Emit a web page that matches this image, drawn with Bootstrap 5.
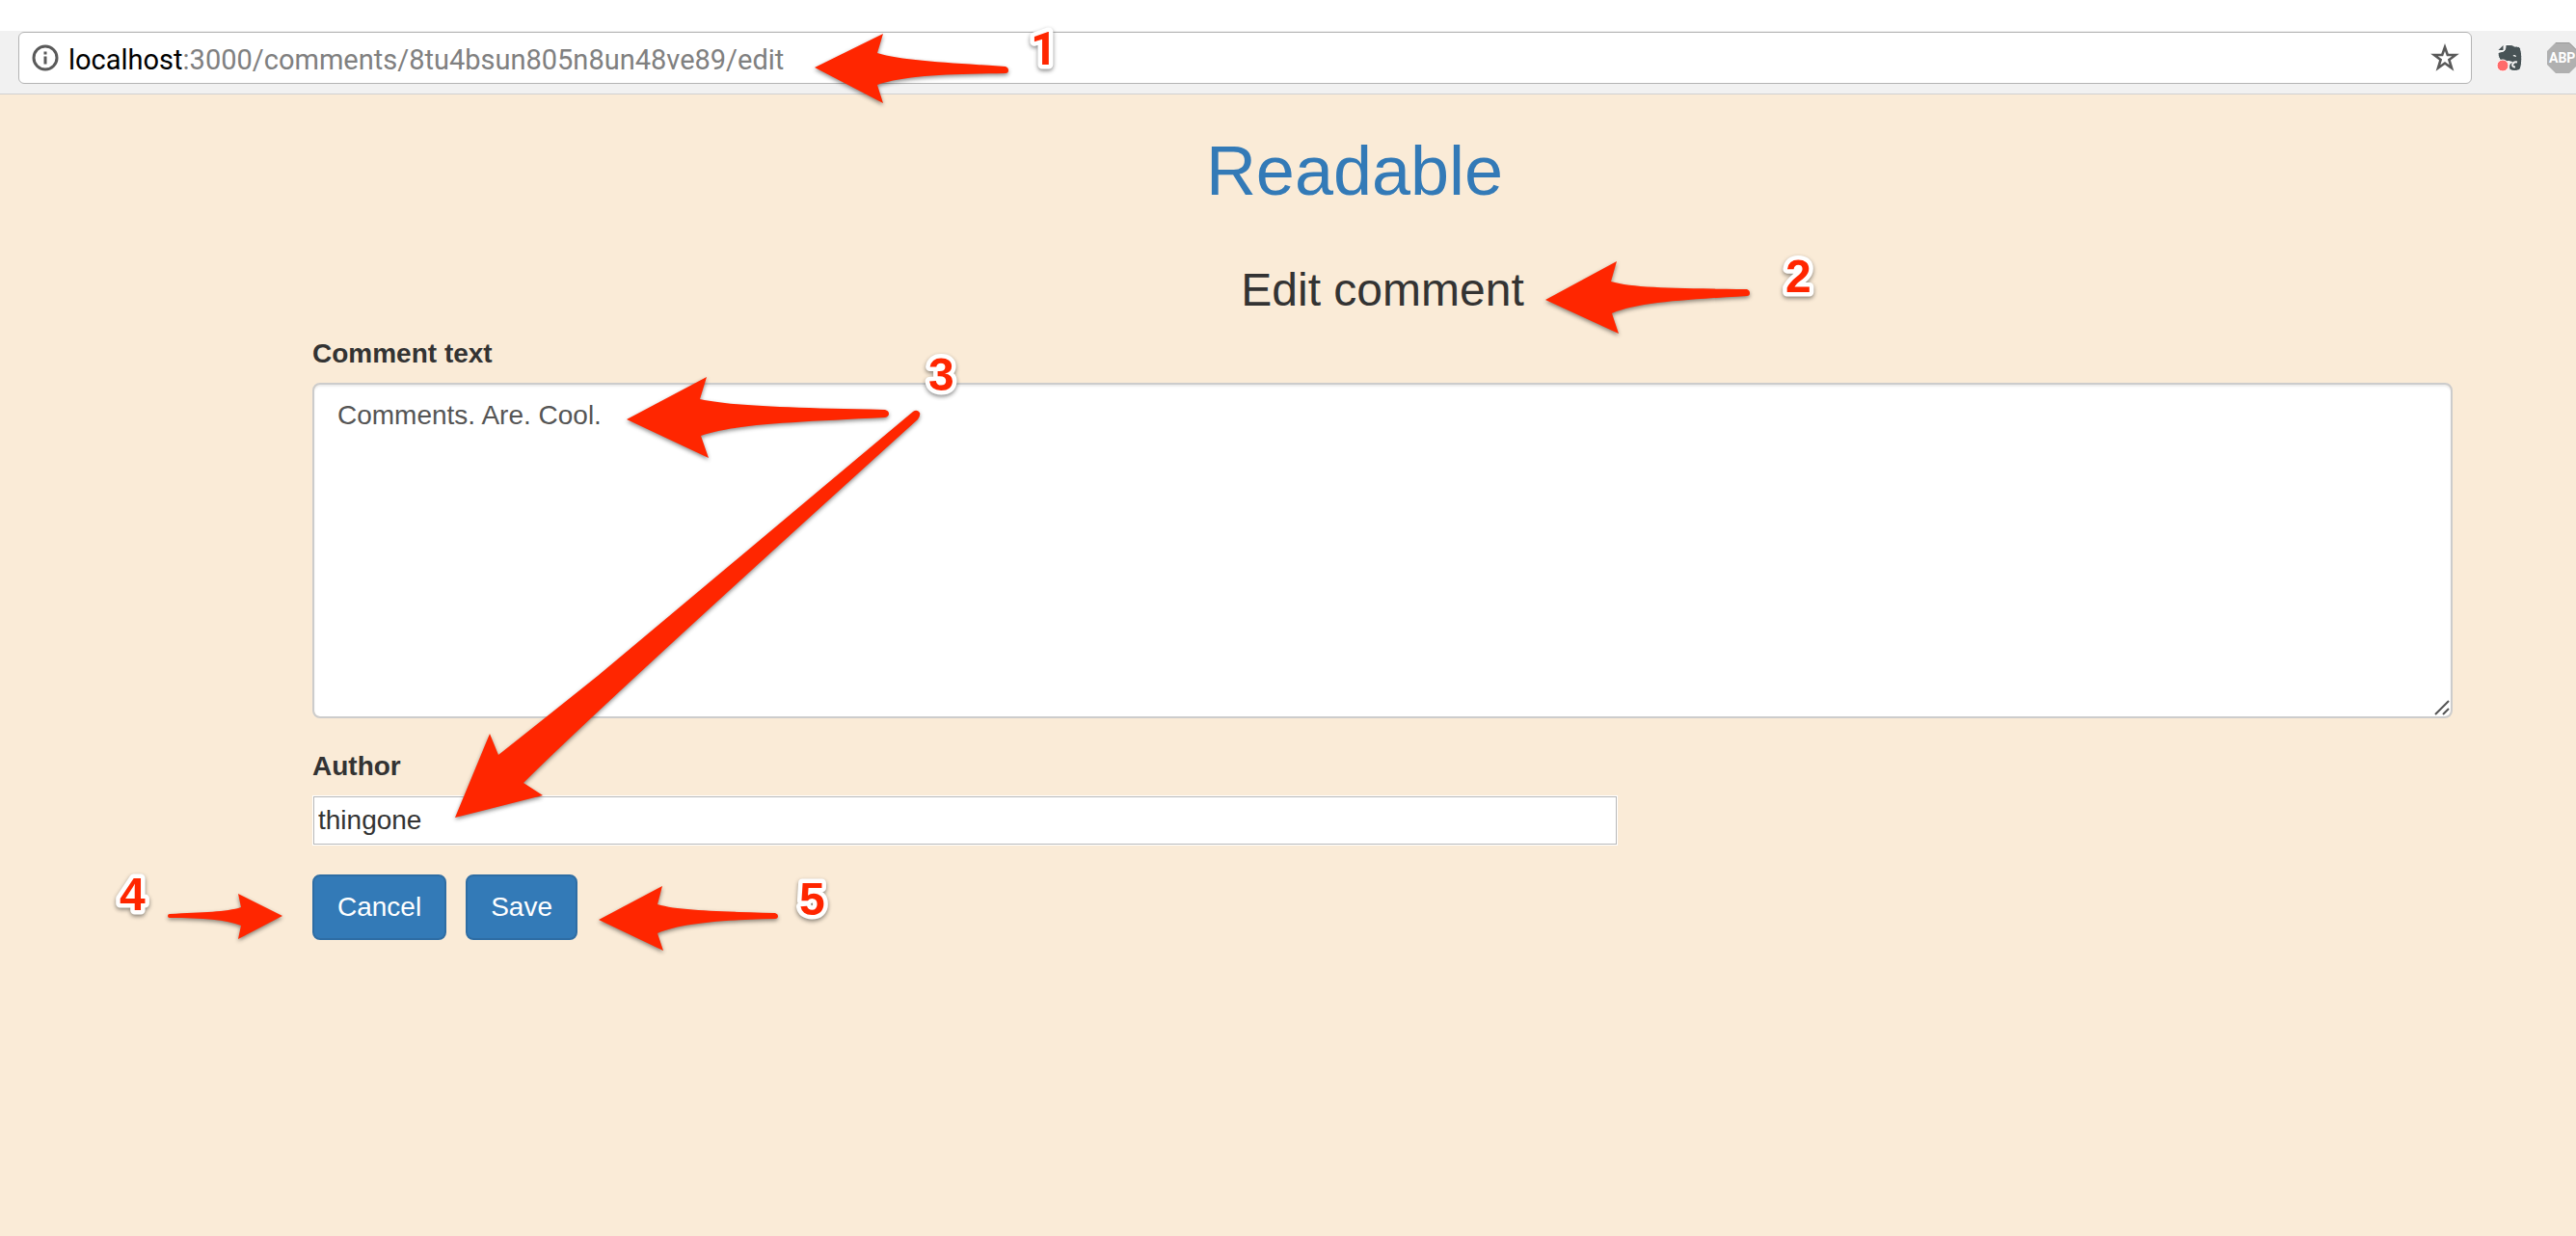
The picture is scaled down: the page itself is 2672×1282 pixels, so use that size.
<!DOCTYPE html>
<html lang="en">
<head>
<meta charset="utf-8">
<meta name="viewport" content="width=device-width, initial-scale=1">
<title>Readable</title>
<link href="https://cdn.jsdelivr.net/npm/bootstrap@5.3.0/dist/css/bootstrap.min.css" rel="stylesheet">
<style>
  body { background: #faebd7; color: #333; font: 28px/40px "Liberation Sans", Arial, sans-serif; }
  .page-shell { min-height: 100vh; }
  .tab-strip { height: 32px; background: #fff; }
  .browser-bar { background: #f1f1f1; border-bottom: 1px solid #d0d0d0; padding: 1px 0 10px 19px; }
  .address-box { height: 54px; background: #fff; border: 1px solid #b4b4b4; border-radius: 6px; padding: 0 12px 0 11px; font-family: Roboto, sans-serif; font-size: 29px; color: #808080; }
  .address-box b { font-weight: 400; color: #000; }
  .extensions { padding-left: 24px; width: 108px; gap: 22px; }
  .site-head { padding: 40px 0 59px 138px; }
  .site-head h1 { font-size: 72px; line-height: 78px; font-weight: 400; }
  .site-head a { color: #337ab7; }
  .edit-page { padding: 0 128px 0 324px; }
  .edit-page h2 { font-size: 48px; line-height: 52px; font-weight: 400; margin-bottom: 20px; }
  .field { margin-bottom: 30px; }
  .field label { display: block; font-weight: 700; margin-bottom: 10px; }
  .comment-box { height: 348px; font-size: 28px; line-height: 40px; padding: 12px 24px; border: 2px solid #ccc; border-radius: 8px; color: #555; resize: none; box-shadow: inset 0 2px 2px rgba(0,0,0,.075); }
  .author-box { display: block; width: 61%; height: 52px; border: 1px solid #fff; box-shadow: inset 0 0 0 1px #b8b8b8; padding: 0 5px; background: #fff; color: #333; }
  .btn-site { --bs-btn-color: #fff; --bs-btn-bg: #337ab7; --bs-btn-border-color: #2e6da4; --bs-btn-hover-color: #fff; --bs-btn-hover-bg: #286090; --bs-btn-hover-border-color: #204d74; font-size: 28px; line-height: 40px; padding: 12px 24px; border-width: 2px; border-radius: 8px; }
  .btn-row { gap: 20px; }
  .grip { right: 3px; bottom: 3px; pointer-events: none; }
  .callouts { pointer-events: none; filter: drop-shadow(0 2px 2px rgba(0,0,0,.45)); }
  .callouts text { font: 700 48px "Liberation Sans", Arial, sans-serif; stroke: #fff; stroke-width: 9px; stroke-linejoin: round; paint-order: stroke; }
  .callouts .plain-one { font-family: Roboto, sans-serif; }
</style>
<script src="https://cdn.jsdelivr.net/npm/bootstrap@5.3.0/dist/js/bootstrap.bundle.min.js"></script>
</head>
<body>
<div class="page-shell position-relative overflow-hidden">
  <div class="tab-strip"></div>
  <div class="browser-bar d-flex align-items-center">
    <div class="address-box d-flex align-items-center flex-grow-1">
      <svg width="32" height="32" viewBox="0 0 32 32" aria-hidden="true"><circle cx="16" cy="16" r="12" fill="none" stroke="#5a5a5a" stroke-width="3"/><path d="M14.500 9.500h3v3h-3zM14.500 14.500h3v8h-3z" fill="#5a5a5a"/></svg>
      <span class="flex-grow-1 ps-2 pt-1"><b>localhost</b>:3000/comments/8tu4bsun805n8un48ve89/edit</span>
      <svg width="30" height="30" viewBox="0 0 30 30" aria-hidden="true"><path d="M15 4l2.800 8H26l-6.600 5 2.600 8.500-7-5-7 5L10.600 17 4 12h8.200z" fill="none" stroke="#5a5a5a" stroke-width="2.600"/></svg>
    </div>
    <div class="extensions d-flex align-items-center">
      <svg class="flex-shrink-0" width="32" height="32" viewBox="0 0 32 32" aria-hidden="true">
        <path d="M11 2.500h5c2 0 3 1 4 1.500 4 0 6 .500 6.500 2.500 2 7 1.500 15 0 20.500-1 3-10 3.500-11.500.500-1-3 0-6 3-7l-4-1c-6 2-11-1-11-9l6-1.500c1.500-1 2-3 2-6.500z" fill="#485356" stroke="#fff"/>
        <path d="M3.500 8l5-5v5z" fill="#485356"/>
        <path d="M18.500 14c1-2 3.500-1 3.500 1z" fill="#fff"/>
        <path d="M23 20.500c-5-1-7 5-2 5" fill="none" stroke="#f1f1f1" stroke-width="2"/>
        <circle cx="8" cy="24" r="6" fill="#ff6b6b" stroke="#fff" stroke-width="1"/>
      </svg>
      <svg class="flex-shrink-0" width="32" height="32" viewBox="0 0 32 32" role="img" aria-label="ABP"><path d="M9 0h14l9 9v14l-9 9H9l-9-9V9z" fill="#b0b0b0"/><path d="M9 .500h14l9 9" stroke="#999" fill="none"/><text x="2" y="21" font-family="Roboto" font-weight="700" font-size="14" fill="#fff">ABP</text></svg>
    </div>
  </div>

  <header class="site-head text-center">
    <h1 class="m-0"><a class="text-decoration-none" href="#">Readable</a></h1>
  </header>

  <main class="edit-page">
    <h2 class="text-center">Edit comment</h2>
    <form>
      <div class="field">
        <label for="comment">Comment text</label>
        <div class="position-relative">
          <textarea class="form-control comment-box" id="comment" spellcheck="false">Comments. Are. Cool.</textarea>
          <svg class="grip position-absolute" width="16" height="16" viewBox="0 0 16 16" aria-hidden="true"><path d="M1 15L15 1M9 15l6-6" stroke="#555" stroke-width="2"/></svg>
        </div>
      </div>
      <div class="field">
        <label for="author">Author</label>
        <input class="author-box" id="author" type="text" value="thingone" spellcheck="false">
      </div>
      <div class="btn-row d-flex">
        <button type="button" class="btn btn-site">Cancel</button>
        <button type="button" class="btn btn-site">Save</button>
      </div>
    </form>
  </main>

  <!-- numbered callouts drawn over the page -->
  <svg class="callouts position-absolute top-0 start-0" width="2672" height="1282" viewBox="0 0 2672 1282" fill="#ff2600">
    <path d="M845 70L916 35L910 55C935 63 985 65 1043 69Q1046 70 1046 73Q1046 76 1043 76C985 77 940 78 910 88L916 107Z"/>
    <path d="M1603 311L1677 271L1671 292C1695 299 1740 299 1812 300Q1815 301 1815 304Q1815 307 1812 307C1750 311 1700 313 1672 325L1679 346Z"/>
    <path d="M650 435L733 391L726 414C760 421 810 423 918 425Q922 426 922 429Q922 432 918 433C820 438 760 440 727 452L735 475Z"/>
    <path d="M472 848L508 761L517 783Q565 745 620 701L947 427Q951 424 954 428Q955 431 952 435Q620 735 543 812L563 825Z"/>
    <path d="M293 950L247 927L250 941C235 946 210 946 176 948Q174 948 174 950Q174 952 176 952C210 952 235 954 250 960L247 974Z"/>
    <path d="M621 954L687 919L682 938C705 945 750 945 804 947Q807 948 807 950Q807 953 804 953C750 954 705 958 682 968L688 986Z"/>
    <text class="plain-one" x="1069" y="67">1</text>
    <text x="1852" y="303">2</text>
    <text x="963" y="405">3</text>
    <text x="124" y="944">4</text>
    <text x="829" y="949">5</text>
  </svg>
</div>
</body>
</html>
